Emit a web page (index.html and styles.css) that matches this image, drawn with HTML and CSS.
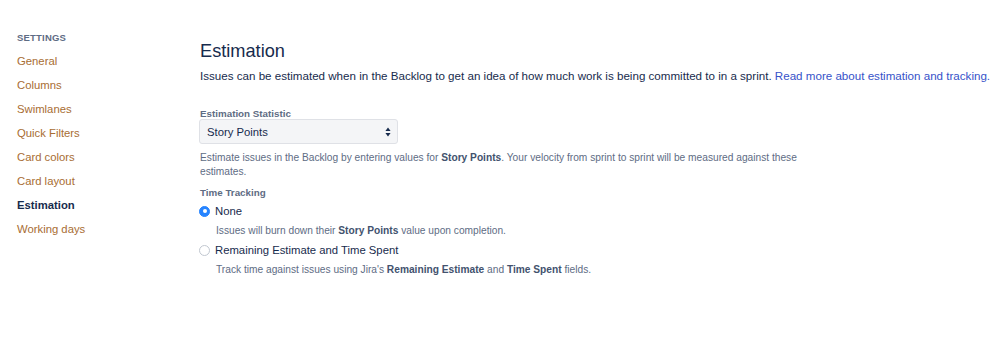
FILE: index.html
```html
<!DOCTYPE html>
<html>
<head>
<meta charset="utf-8">
<link rel="stylesheet" href="styles.css">
</head>
<body>
<div class="page">
  <nav class="sidebar">
    <div class="side-title">SETTINGS</div>
    <a class="side-link">General</a>
    <a class="side-link">Columns</a>
    <a class="side-link">Swimlanes</a>
    <a class="side-link">Quick Filters</a>
    <a class="side-link">Card colors</a>
    <a class="side-link">Card layout</a>
    <a class="side-link active">Estimation</a>
    <a class="side-link">Working days</a>
  </nav>
  <main class="content">
    <h1 class="title">Estimation</h1>
    <p class="intro">Issues can be estimated when in the Backlog to get an idea of how much work is being committed to in a sprint. <a class="link">Read more about estimation and tracking.</a></p>
    <div class="field">
      <label class="field-label">Estimation Statistic</label>
      <div class="select">
        <span>Story Points</span>
        <svg class="arrows" width="6" height="10" viewBox="0 0 6 10"><path d="M3 0.5L5.6 4H0.4z M3 9.5L5.6 6H0.4z" fill="#172b4d"/></svg>
      </div>
      <div class="help wide">Estimate issues in the Backlog by entering values for <b>Story Points</b>. Your velocity from sprint to sprint will be measured against these estimates.</div>
    </div>
    <div class="field tt">
      <label class="field-label">Time Tracking</label>
      <div class="radio-row first">
        <span class="radio checked"></span><span class="radio-label">None</span>
      </div>
      <div class="help indent">Issues will burn down their <b>Story Points</b> value upon completion.</div>
      <div class="radio-row">
        <span class="radio"></span><span class="radio-label">Remaining Estimate and Time Spent</span>
      </div>
      <div class="help indent">Track time against issues using Jira's <b>Remaining Estimate</b> and <b>Time Spent</b> fields.</div>
    </div>
  </main>
</div>
</body>
</html>
```
FILE: styles.css
```css
* { box-sizing: border-box; }
html, body { margin: 0; padding: 0; background: #fff; }
body { font-family: "Liberation Sans", Arial, sans-serif; color: #172b4d; }
.page { display: flex; padding: 0 0 0 17px; }
.sidebar { width: 183px; display: flex; flex-direction: column; padding-top: 32px; }
.side-title { font-size: 9.5px; font-weight: bold; color: #5e6c84; line-height: 12px; margin-bottom: 5px; letter-spacing: 0.2px; }
.side-link { font-size: 11.3px; line-height: 24px; color: #a86d33; text-decoration: none; }
.side-link.active { color: #172b4d; font-weight: bold; }
.content { padding-top: 39px; }
.title { font-size: 18.2px; font-weight: normal; margin: 0; line-height: 24px; color: #172b4d; }
.intro { font-size: 11.6px; margin: 5px 0 0 0; line-height: 16px; color: #172b4d; white-space: nowrap; }
.link { color: #3652c9; text-decoration: none; }
.field { margin-top: 24px; }
.field-label { display: block; font-size: 9.8px; font-weight: bold; color: #5e6c84; line-height: 12px; }
.select { width: 199px; height: 25px; margin: -1px 0 0 -1px; background: #f4f5f7; border: 1px solid #dfe1e6; border-radius: 3px; display: flex; align-items: center; justify-content: space-between; padding: 0 6px 0 7px; font-size: 11.3px; color: #172b4d; }
.help { font-size: 10.2px; line-height: 14px; color: #5e6c84; }
.help b { color: #42526e; }
.help.wide { width: 604px; margin-top: 7px; }
.tt { margin-top: 8px; }
.radio-row { display: flex; align-items: center; height: 18px; margin-top: 3px; }
.radio-row.first { margin-top: 3px; }
.radio { width: 11px; height: 11px; border-radius: 50%; border: 1px solid #c1c7d0; background: #fff; margin-right: 5px; margin-left: -1px; }
.radio.checked { background: #2684ff; border-color: #2684ff; display: flex; align-items: center; justify-content: center; }
.radio.checked::after { content: ""; width: 4px; height: 4px; border-radius: 50%; background: #fff; }
.radio-label { font-size: 11.3px; color: #172b4d; }
.indent { padding-left: 16px; margin-top: 4px; }
```
